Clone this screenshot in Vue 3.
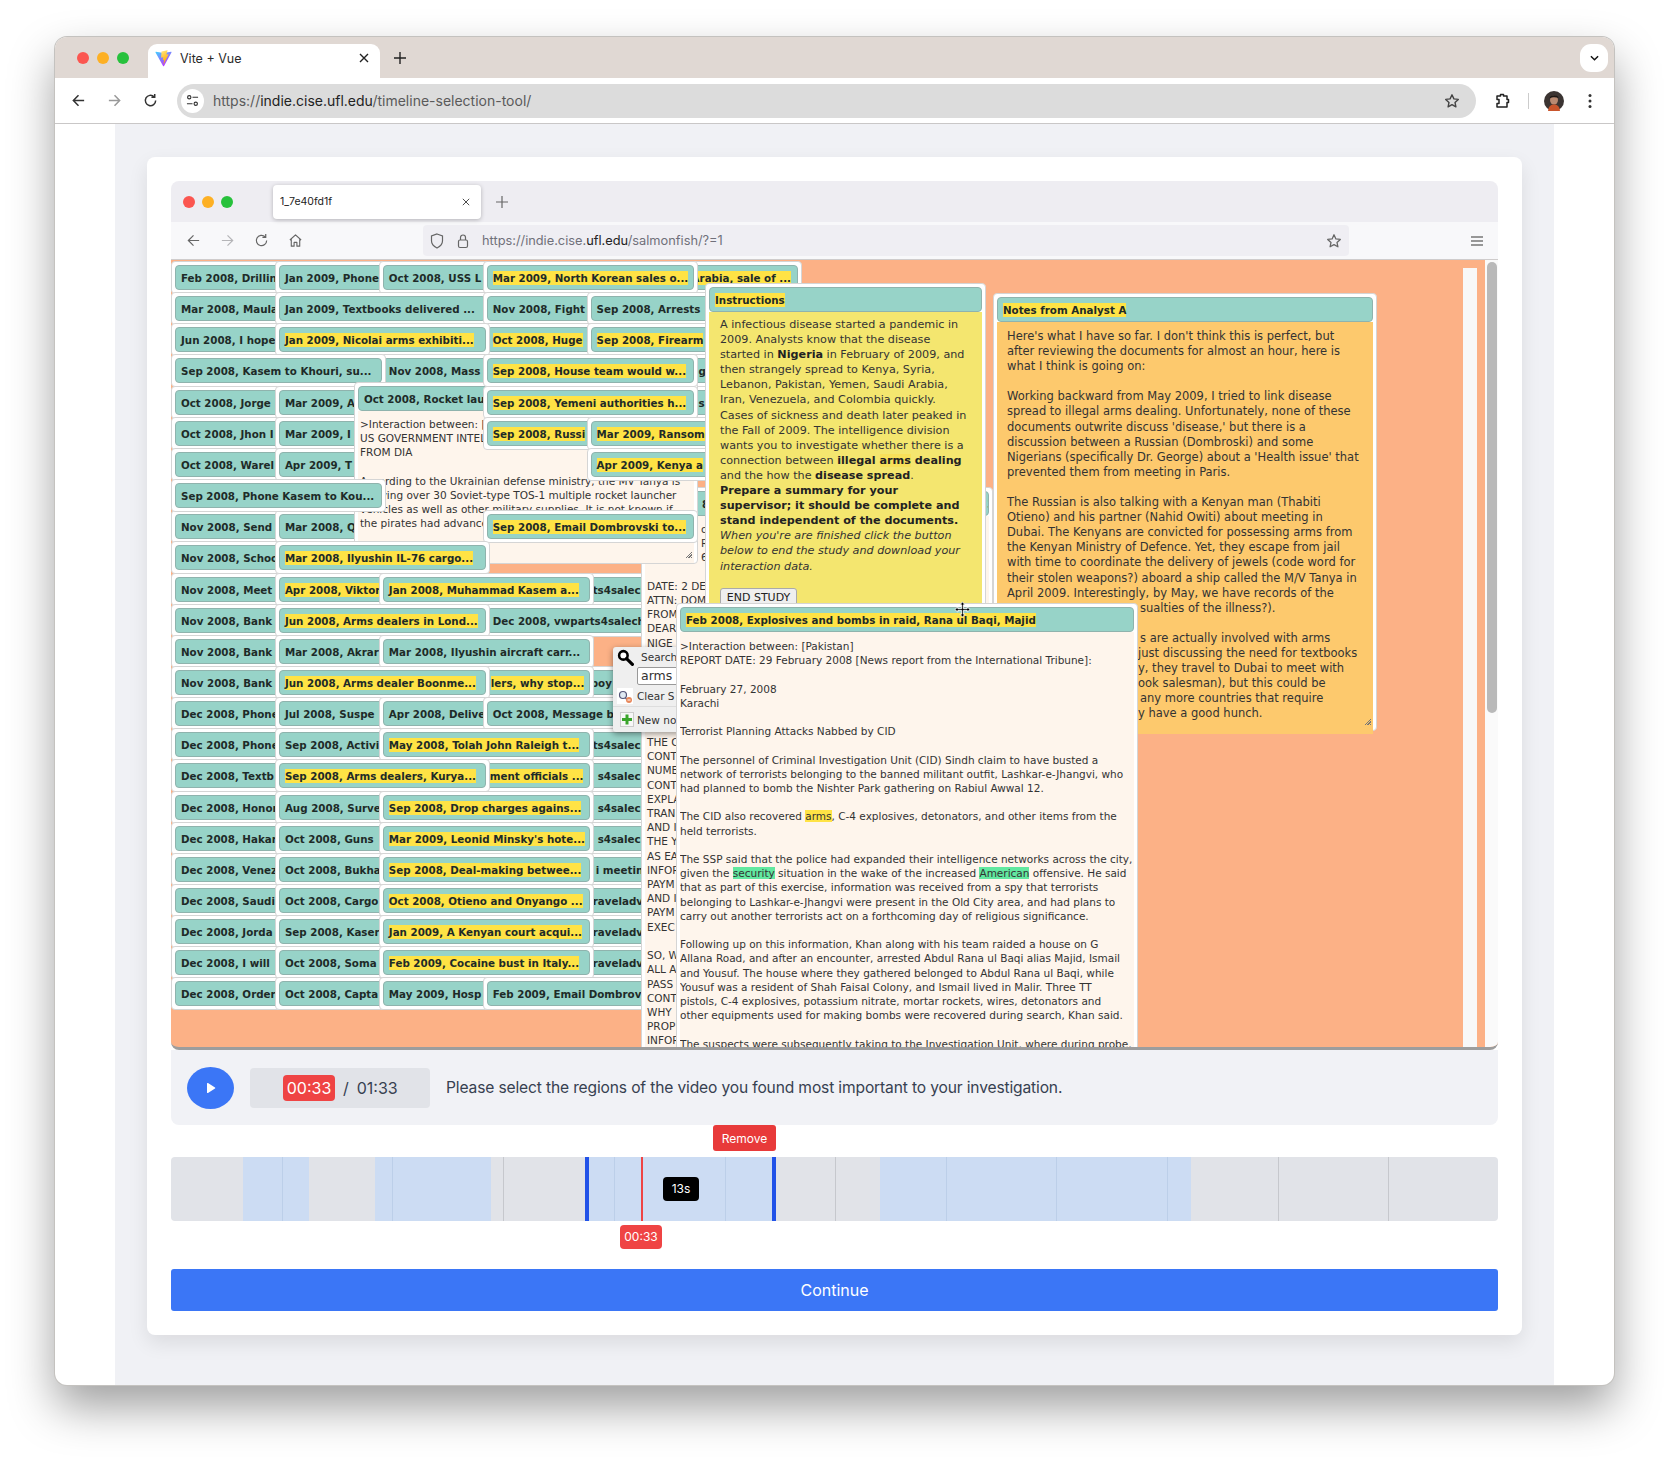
<template>
  <div class="stage">
    <div class="window">
      <div class="tabstrip">
        <div class="lights"><i class="red"></i><i class="amber"></i><i class="green"></i></div>
        <div class="tab">
          <svg class="vite" viewBox="0 0 32 32" width="17" height="17">
            <defs>
              <linearGradient id="vp" x1="0" y1="0" x2="0.6" y2="1"><stop offset="0" stop-color="#41d1ff" /><stop offset="1" stop-color="#bd34fe" /></linearGradient>
              <linearGradient id="vy" x1="0" y1="0" x2="0.3" y2="1"><stop offset="0" stop-color="#ffea83" /><stop offset="1" stop-color="#ffa800" /></linearGradient>
            </defs>
            <path d="M31 4.500 17 30c-.4.700-1.400.700-1.800 0L1 4.500c-.4-.7.200-1.600 1-1.400l14 2.500 14-2.500c.8-.2 1.400.700 1 1.400z" fill="url(#vp)" />
            <path d="M23 .5 12.500 2.600c-.2 0-.3.200-.3.400l-.7 11c0 .3.200.5.500.4l3-.7c.3 0 .5.200.5.500l-.9 4.300c0 .3.200.5.500.4l1.800-.6c.3 0 .5.200.5.500l-1.400 6.800c0 .4.500.6.700.3l.2-.3 8.600-17.200c.1-.3-.1-.6-.4-.5l-3 .6c-.3 0-.5-.2-.5-.5l2-7.100c0-.4-.2-.6-.6-.5z" fill="url(#vy)" />
          </svg>
          <span class="tab-title">Vite + Vue</span>
          <svg class="tab-x" viewBox="0 0 10 10" width="10" height="10"><path d="M1 1l8 8M9 1l-8 8" stroke="#222" stroke-width="1.400" /></svg>
        </div>
        <svg class="tab-plus" viewBox="0 0 12 12" width="12" height="12"><path d="M6 0v12M0 6h12" stroke="#222" stroke-width="1.400" /></svg>
        <div class="tab-menu">
          <svg viewBox="0 0 10 6" width="9" height="6"><path d="M1 1l4 4 4-4" fill="none" stroke="#111" stroke-width="1.600" /></svg>
        </div>
      </div>

      <div class="toolbar">
        <svg class="nav" viewBox="0 0 16 16" width="15" height="15"><path d="M14 8H3M8 2.500 2.500 8 8 13.500" fill="none" stroke="#333" stroke-width="1.600" /></svg>
        <svg class="nav" viewBox="0 0 16 16" width="15" height="15"><path d="M2 8h11M8 2.500 13.500 8 8 13.500" fill="none" stroke="#999" stroke-width="1.600" /></svg>
        <svg class="nav" viewBox="0 0 16 16" width="15" height="15"><path d="M13.500 8A5.500 5.500 0 1 1 11.800 4M12.500 1v3.600H9" fill="none" stroke="#333" stroke-width="1.600" /></svg>
        <div class="omnibox">
          <span class="site-btn">
            <svg viewBox="0 0 14 14" width="13" height="13"><g fill="none" stroke="#333" stroke-width="1.200"><circle cx="3.500" cy="3.500" r="1.800" /><circle cx="10.500" cy="10.500" r="1.800" /><path d="M7 3.500h6M1 10.500h6" /></g></svg>
          </span>
          <span class="url"><span class="dim">https://</span>indie.cise.ufl.edu<span class="dim">/timeline-selection-tool/</span></span>
          <svg class="omni-star" viewBox="0 0 16 16" width="16" height="16"><path d="M8 1.800l1.900 4.100 4.400.5-3.300 3 .9 4.400L8 11.600l-3.900 2.200.9-4.400-3.300-3 4.400-.5z" fill="none" stroke="#444" stroke-width="1.400" stroke-linejoin="round" /></svg>
        </div>
        <svg class="puzzle" viewBox="0 0 16 16" width="16" height="18"><path d="M3 3h3.500V1.500h3V3H13v3.500h1.500v3H13V14H3V10.500h2v-4H3z" fill="none" stroke="#222" stroke-width="1.500" stroke-linejoin="round" /></svg>
        <span class="tool-sep"></span>
        <svg class="avatar" viewBox="0 0 20 20" width="20" height="20">
          <circle cx="10" cy="10" r="10" fill="#3b3432" />
          <ellipse cx="10" cy="9" rx="4" ry="4.500" fill="#b98a72" />
          <path d="M4 20c.5-5 3-6.500 6-6.500s5.500 1.500 6 6.500z" fill="#c9552c" />
          <path d="M5.500 7.500C6 3.500 14 3 14.500 7 12 6 8 6 5.500 7.500z" fill="#1d1715" />
        </svg>
        <svg class="dots" viewBox="0 0 4 16" width="4" height="16"><circle cx="2" cy="2.500" r="1.500" fill="#333" /><circle cx="2" cy="8" r="1.500" fill="#333" /><circle cx="2" cy="13.500" r="1.500" fill="#333" /></svg>
      </div>

      <div class="page">
        <div class="card">
          <div class="inner-tabs">
            <div class="lights small"><i class="red"></i><i class="amber"></i><i class="green"></i></div>
            <div class="inner-tab">
              <span>1_7e40fd1f</span>
              <svg viewBox="0 0 10 10" width="8" height="8"><path d="M1 1l8 8M9 1l-8 8" stroke="#444" stroke-width="1.200" /></svg>
            </div>
            <svg class="inner-plus" viewBox="0 0 12 12" width="12" height="12"><path d="M6 0v12M0 6h12" stroke="#666" stroke-width="1.200" /></svg>
          </div>
          <div class="inner-toolbar">
            <svg class="inav" viewBox="0 0 16 16" width="15" height="15"><path d="M14 8H2.500M8 2.500 2.500 8 8 13.500" fill="none" stroke="#666" stroke-width="1.300" /></svg>
            <svg class="inav" viewBox="0 0 16 16" width="15" height="15"><path d="M2 8h11.500M8 2.500 13.500 8 8 13.500" fill="none" stroke="#b5b5b8" stroke-width="1.300" /></svg>
            <svg class="inav" viewBox="0 0 16 16" width="15" height="15"><path d="M13.500 8A5.500 5.500 0 1 1 11.800 4M12.500 1v3.600H9" fill="none" stroke="#666" stroke-width="1.300" /></svg>
            <svg class="inav" viewBox="0 0 16 16" width="15" height="15"><path d="M2 7.500 8 2l6 5.500M3.500 6.500V14h3v-4h3v4h3V6.500" fill="none" stroke="#666" stroke-width="1.200" stroke-linejoin="round" /></svg>
            <div class="inner-omnibox">
              <svg viewBox="0 0 14 16" width="14" height="16"><path d="M7 1l5.500 2v5c0 3.500-2.500 5.500-5.500 7-3-1.500-5.500-3.500-5.500-7V3z" fill="none" stroke="#666" stroke-width="1.200" /></svg>
              <svg viewBox="0 0 12 16" width="12" height="16"><rect x="1.500" y="7" width="9" height="7.500" rx="1.500" fill="none" stroke="#666" stroke-width="1.200" /><path d="M3.500 7V4.500a2.500 2.500 0 0 1 5 0V7" fill="none" stroke="#666" stroke-width="1.200" /></svg>
              <span class="inner-url">https://indie.cise.<b>ufl.edu</b>/salmonfish/?=1</span>
              <svg class="inner-star" viewBox="0 0 16 16" width="16" height="16"><path d="M8 1.800l1.900 4.100 4.400.5-3.300 3 .9 4.400L8 11.600l-3.900 2.200.9-4.400-3.300-3 4.400-.5z" fill="none" stroke="#666" stroke-width="1.300" stroke-linejoin="round" /></svg>
            </div>
            <svg class="inner-menu" viewBox="0 0 12 12" width="12" height="12"><path d="M0 2h12M0 6h12M0 10h12" stroke="#777" stroke-width="1.400" /></svg>
          </div>

          <div class="canvas">
            <div class="page-strip"></div>
            <div class="scroll-track"><div class="scroll-thumb"></div></div>

            <div v-for="(d, i) in baseDocs" :key="'b' + i" class="doc" :style="docPos(d)">
              <div class="doc-title" :style="{ paddingLeft: d.p + 'px' }"><span :class="{ hl: d.y }">{{ d.t }}</span></div>
            </div>

            <div class="win date-win">
              <div class="doc-title date-title"><span>8</span><span class="date-tail">3.</span></div>
              <div class="win-body date-body">
                <template v-for="(l, i) in dateLines" :key="i"><span :style="{ marginLeft: l.x + 'px' }">{{ l.t }}</span><br /></template>
              </div>
            </div>

            <div class="win rocket-win">
              <div class="doc-title">Oct 2008, Rocket lau</div>
              <div class="win-body">
                &gt;Interaction between: [<br />
                US GOVERNMENT INTEL<br />
                FROM DIA<br />
                <br />
                According to the Ukrainian defense ministry, the MV Tanya is<br />
                carrying over 30 Soviet-type TOS-1 multiple rocket launcher<br />
                vehicles as well as other military supplies. It is not known if<br />
                the pirates had advance
              </div>
              <span class="grip"></span>
            </div>

            <div v-for="(d, i) in topDocs" :key="'t' + i" class="doc" :style="docPos(d)">
              <div class="doc-title"><span :class="{ hl: d.y }">{{ d.t }}</span></div>
            </div>

            <div class="win instr-win">
              <div class="doc-title"><span class="hl">Instructions</span></div>
              <div class="win-body instr-body">
                A infectious disease started a pandemic in<br />
                2009. Analysts know that the disease<br />
                started in <b>Nigeria</b> in February of 2009, and<br />
                then strangely spread to Kenya, Syria,<br />
                Lebanon, Pakistan, Yemen, Saudi Arabia,<br />
                Iran, Venezuela, and Colombia quickly.<br />
                Cases of sickness and death later peaked in<br />
                the Fall of 2009. The intelligence division<br />
                wants you to investigate whether there is a<br />
                connection between <b>illegal <span class="soft">arms</span> dealing</b><br />
                and the how the <b>disease spread</b>.<br />
                <b>Prepare a summary for your<br />
                supervisor; it should be complete and<br />
                stand independent of the documents.</b><br />
                <i>When you're are finished click the button<br />
                below to end the study and download your<br />
                interaction data.</i>
                <button class="end-btn">END STUDY</button>
              </div>
            </div>

            <div class="win notes-win">
              <div class="doc-title"><span class="hl">Notes from Analyst A</span></div>
              <div class="win-body notes-body">
                <template v-for="(l, i) in noteLines" :key="i"><span :style="{ marginLeft: l.x + 'px' }">{{ l.t }}</span><br /></template>
              </div>
              <span class="grip"></span>
            </div>

            <div class="search-pop">
              <div class="pop-row pop-search">
                <svg viewBox="0 0 16 16" width="17" height="17"><circle cx="6" cy="6" r="4" fill="#fff" stroke="#000" stroke-width="2.400" /><path d="M9 9l5.500 5.500" stroke="#000" stroke-width="3" stroke-linecap="round" /></svg>
                <span>Search</span>
              </div>
              <div class="pop-input">arms</div>
              <div class="pop-row pop-clear">
                <svg viewBox="0 0 16 16" width="16" height="16"><rect width="16" height="16" fill="#fff" /><circle cx="6" cy="7" r="3.500" fill="#dfe9f2" stroke="#557" stroke-width="1.200" /><path d="M8.500 10l2 2" stroke="#557" stroke-width="1.400" /><circle cx="12" cy="12" r="3" fill="#e8875a" /><path d="M10.500 12h3" stroke="#fff" /></svg>
                <span>Clear S</span>
              </div>
              <div class="pop-row pop-new">
                <span class="plus-box"><svg viewBox="0 0 12 12" width="13" height="13"><path d="M6 1v10M1 6h10" stroke="#3aa52c" stroke-width="3" /></svg></span>
                <span>New no</span>
              </div>
            </div>

            <div class="win feb-win">
              <div class="doc-title"><span class="hl">Feb 2008, Explosives and bombs in raid, Rana ul Baqi, Majid</span></div>
              <div class="win-body feb-body">
                &gt;Interaction between: [Pakistan]<br />
                REPORT DATE: 29 February 2008 [News report from the International Tribune]:<br />
                <br />
                February 27, 2008<br />
                Karachi<br />
                <br />
                Terrorist Planning Attacks Nabbed by CID<br />
                <br />
                The personnel of Criminal Investigation Unit (CID) Sindh claim to have busted a<br />
                network of terrorists belonging to the banned militant outfit, Lashkar-e-Jhangvi, who<br />
                had planned to bomb the Nishter Park gathering on Rabiul Awwal 12.<br />
                <br />
                The CID also recovered <span class="mark-y">arms</span>, C-4 explosives, detonators, and other items from the<br />
                held terrorists.<br />
                <br />
                The SSP said that the police had expanded their intelligence networks across the city,<br />
                given the <span class="mark-g">security</span> situation in the wake of the increased <span class="mark-g">American</span> offensive. He said<br />
                that as part of this exercise, information was received from a spy that terrorists<br />
                belonging to Lashkar-e-Jhangvi were present in the Old City area, and had plans to<br />
                carry out another terrorists act on a forthcoming day of religious significance.<br />
                <br />
                Following up on this information, Khan along with his team raided a house on G<br />
                Allana Road, and after an encounter, arrested Abdul Rana ul Baqi alias Majid, Ismail<br />
                and Yousuf. The house where they gathered belonged to Abdul Rana ul Baqi, while<br />
                Yousuf was a resident of Shah Faisal Colony, and Ismail lived in Malir. Three TT<br />
                pistols, C-4 explosives, potassium nitrate, mortar rockets, wires, detonators and<br />
                other equipments used for making bombs were recovered during search, Khan said.<br />
                <br />
                The suspects were subsequently taking to the Investigation Unit, where during probe,
              </div>
            </div>

            <svg class="move-cursor" viewBox="0 0 20 20" width="17" height="17">
              <path d="M10 1l3 3.500h-2v4.500h4.500V7l3.500 3-3.500 3v-2H11v4.500h2L10 19l-3-3.500h2V11H4.500v2L1 10l3.500-3v2H9V4.500H7z" fill="#000" stroke="#fff" stroke-width="1" />
            </svg>
          </div>

          <div class="controls">
            <button class="play"><svg viewBox="0 0 10 12" width="10" height="12"><path d="M1 1.500v9c0 .5.500.8 1 .5l7-4.500c.4-.2.400-.8 0-1L2 1c-.5-.3-1 0-1 .5z" fill="#fff" /></svg></button>
            <div class="time-box">
              <span class="time-now">00:33</span>
              <span>/</span>
              <span>01:33</span>
            </div>
            <span class="hint">Please select the regions of the video you found most important to your investigation.</span>
          </div>

          <div class="timeline">
            <div class="track">
              <div v-for="(s, i) in segments" :key="'s' + i" class="segment" :style="{ left: s.x + 'px', width: s.w + 'px' }"></div>
              <div class="segment active"></div>
              <div v-for="x in grayTicks" :key="'g' + x" class="tick" :style="{ left: x + 'px' }"></div>
              <div v-for="x in blueTicks" :key="'k' + x" class="tick blue" :style="{ left: x + 'px' }"></div>
              <div class="playhead"></div>
              <div class="duration">13s</div>
            </div>
            <button class="remove">Remove</button>
            <div class="time-tag">00:33</div>
          </div>

          <button class="continue">Continue</button>
        </div>
      </div>
    </div>
  </div>
</template>

<script setup>
// r = row on the canvas, c = column, y = highlighted, p = left padding of the title
const doc = (r, c, t, y = false, p = 5) => ({ r, c, t, y, p })

const baseDocs = [
  doc(0, 4, 'Arabia, sale of ...', true, 100),
  doc(0, 0, 'Feb 2008, Drillin'), doc(0, 1, 'Jan 2009, Phone'), doc(0, 2, 'Oct 2008, USS L'),
  doc(0, 3, 'Mar 2009, North Korean sales o...', true),
  doc(1, 0, 'Mar 2008, Maula'), doc(1, 1, 'Jan 2009, Textbooks delivered ...'), doc(1, 3, 'Nov 2008, Fight'), doc(1, 4, 'Sep 2008, Arrests'),
  doc(2, 0, 'Jun 2008, I hope'), doc(2, 3, 'Oct 2008, Huge', true), doc(2, 4, 'Sep 2008, Firearm', true),
  doc(2, 1, 'Jan 2009, Nicolai arms exhibiti...', true),
  doc(3, 2, 'Nov 2008, Mass'), doc(3, 4, 'g', false, 107),
  doc(3, 0, 'Sep 2008, Kasem to Khouri, su...'),
  doc(4, 0, 'Oct 2008, Jorge'), doc(4, 1, 'Mar 2009, A'), doc(4, 4, 's', false, 107),
  doc(5, 0, 'Oct 2008, Jhon I'), doc(5, 1, 'Mar 2009, I'),
  doc(6, 0, 'Oct 2008, Warel'), doc(6, 1, 'Apr 2009, T'),
  doc(8, 0, 'Nov 2008, Send'), doc(8, 1, 'Mar 2008, Q'),
  doc(9, 0, 'Nov 2008, Schoo'),
  doc(10, 0, 'Nov 2008, Meet'), doc(10, 1, 'Apr 2008, Viktor', true), doc(10, 3, 'ts4salech', false, 105),
  doc(10, 2, 'Jan 2008, Muhammad Kasem a...', true),
  doc(11, 0, 'Nov 2008, Bank'), doc(11, 3, 'Dec 2008, vwparts4salech'),
  doc(11, 1, 'Jun 2008, Arms dealers in Lond...', true),
  doc(12, 0, 'Nov 2008, Bank'), doc(12, 1, 'Mar 2008, Akrar'), doc(12, 2, 'Mar 2008, Ilyushin aircraft carr...'),
  doc(13, 0, 'Nov 2008, Bank'), doc(13, 3, 'boy', false, 103),
  doc(13, 2, 'lers, why stop...', true, 107),
  doc(13, 1, 'Jun 2008, Arms dealer Boonme...', true),
  doc(14, 0, 'Dec 2008, Phone'), doc(14, 1, 'Jul 2008, Suspe'), doc(14, 2, 'Apr 2008, Delive'), doc(14, 3, 'Oct 2008, Message b'),
  doc(15, 0, 'Dec 2008, Phone'), doc(15, 1, 'Sep 2008, Activi'), doc(15, 3, 'ts4salech', false, 105),
  doc(15, 2, 'May 2008, Tolah John Raleigh t...', true),
  doc(16, 0, 'Dec 2008, Textb'), doc(16, 3, 's4salech', false, 110),
  doc(16, 2, 'ment officials ...', true, 106),
  doc(16, 1, 'Sep 2008, Arms dealers, Kurya...', true),
  doc(17, 0, 'Dec 2008, Honor'), doc(17, 1, 'Aug 2008, Surve'), doc(17, 3, 's4salech', false, 110),
  doc(17, 2, 'Sep 2008, Drop charges agains...', true),
  doc(18, 0, 'Dec 2008, Hakar'), doc(18, 1, 'Oct 2008, Guns'), doc(18, 3, 's4salech', false, 110),
  doc(18, 2, 'Mar 2009, Leonid Minsky\'s hote...', true),
  doc(19, 0, 'Dec 2008, Venez'), doc(19, 1, 'Oct 2008, Bukha'), doc(19, 3, 'i meetin', false, 108),
  doc(19, 2, 'Sep 2008, Deal-making betwee...', true),
  doc(20, 0, 'Dec 2008, Saudi'), doc(20, 1, 'Oct 2008, Cargo'), doc(20, 3, 'raveladv', false, 105),
  doc(20, 2, 'Oct 2008, Otieno and Onyango ...', true),
  doc(21, 0, 'Dec 2008, Jorda'), doc(21, 1, 'Sep 2008, Kaser'), doc(21, 3, 'raveladv', false, 105),
  doc(21, 2, 'Jan 2009, A Kenyan court acqui...', true),
  doc(22, 0, 'Dec 2008, I will'), doc(22, 1, 'Oct 2008, Soma'), doc(22, 3, 'raveladv', false, 105),
  doc(22, 2, 'Feb 2009, Cocaine bust in Italy...', true),
  doc(23, 0, 'Dec 2008, Order'), doc(23, 1, 'Oct 2008, Capta'), doc(23, 2, 'May 2009, Hosp'), doc(23, 3, 'Feb 2009, Email Dombrov')
]

const topDocs = [
  doc(3, 3, 'Sep 2008, House team would w...', true),
  doc(4, 3, 'Sep 2008, Yemeni authorities h...', true),
  doc(5, 3, 'Sep 2008, Russi', true),
  doc(5, 4, 'Mar 2009, Ransom', true),
  doc(6, 4, 'Apr 2009, Kenya a', true),
  doc(7, 0, 'Sep 2008, Phone Kasem to Kou...'),
  doc(8, 3, 'Sep 2008, Email Dombrovski to...', true),
  doc(9, 1, 'Mar 2008, Ilyushin IL-76 cargo...', true)
]

const docPos = (d) => ({
  left: d.c * 103.9 + 'px',
  top: 1 + d.r * 31.15 + 'px'
})

// strings are plain lines, [x, text] lines show only what sticks out from under another window
const toLines = (list) => list.map((l) => (Array.isArray(l) ? { x: l[0], t: l[1] } : { x: 0, t: l }))

const dateLines = toLines([
  [54, 'o'],
  [54, 'RI'],
  [54, '6'],
  '',
  'DATE: 2 DE',
  'ATTN: DOM',
  'FROM',
  'DEAR',
  'NIGE',
  '', '', '', '', '', '',
  'THE C',
  'CONT',
  'NUME',
  'CONT',
  'EXPLA',
  'TRAN',
  'AND I',
  'THE Y',
  'AS EA',
  'INFOR',
  'PAYM',
  'AND I',
  'PAYM',
  'EXEC',
  '',
  'SO, W',
  'ALL A',
  'PASS',
  'CONT',
  'WHY',
  'PROP',
  'INFOR'
])

const noteLines = toLines([
  'Here\'s what I have so far. I don\'t think this is perfect, but',
  'after reviewing the documents for almost an hour, here is',
  'what I think is going on:',
  '',
  'Working backward from May 2009, I tried to link disease',
  'spread to illegal arms dealing. Unfortunately, none of these',
  'documents outwrite discuss \'disease,\' but there is a',
  'discussion between a Russian (Dombroski) and some',
  'Nigerians (specifically Dr. George) about a \'Health issue\' that',
  'prevented them from meeting in Paris.',
  '',
  'The Russian is also talking with a Kenyan man (Thabiti',
  'Otieno) and his partner (Nahid Owiti) about meeting in',
  'Dubai. The Kenyans are convicted for possessing arms from',
  'the Kenyan Ministry of Defence. Yet, they escape from jail',
  'with time to coordinate the delivery of jewels (code word for',
  'their stolen weapons?) aboard a ship called the M/V Tanya in',
  'April 2009. Interestingly, by May, we have records of the',
  [133, 'sualties of the illness?).'],
  '',
  [133, 's are actually involved with arms'],
  [131, 'just discussing the need for textbooks'],
  [131, 'y, they travel to Dubai to meet with'],
  [131, 'ook salesman), but this could be'],
  [133, 'any more countries that require'],
  [131, 'y have a good hunch.']
])

const segments = [
  { x: 72, w: 66 },
  { x: 204, w: 116 },
  { x: 709, w: 311 }
]
const grayTicks = [332, 664, 1107, 1217]
const blueTicks = [111, 221, 443, 554, 775, 885, 996]
</script>

<style>
html,
body {
  background: #fff;
}
</style>

<style scoped>
.stage {
  height: 1459px;
  box-sizing: border-box;
  padding: 37px 56px 0 55px;
  overflow: hidden;
}
.window {
  height: 1348px;
  display: flex;
  flex-direction: column;
  border-radius: 12px;
  background: #fff;
  overflow: hidden;
  box-shadow: 0 0 0 1px #c4c2bf, 0 22px 46px rgba(0, 0, 0, 0.38);
  font-family: Inter, "Liberation Sans", sans-serif;
}

/* chrome */
.tabstrip {
  height: 41px;
  flex: none;
  background: #e0d8d3;
  display: flex;
  align-items: flex-end;
  padding-left: 22px;
}
.lights {
  display: flex;
  gap: 8px;
  align-self: center;
  margin-right: 19px;
}
.lights i {
  width: 12px;
  height: 12px;
  border-radius: 50%;
  display: block;
}
.lights .red { background: #fb5650; }
.lights .amber { background: #fdb024; }
.lights .green { background: #27c13c; }
.tab {
  width: 232px;
  height: 34px;
  background: #fff;
  border-radius: 9px 9px 0 0;
  display: flex;
  align-items: center;
  padding: 0 11px 6px 7px;
  box-sizing: border-box;
}
.tab-title {
  font-size: 12.500px;
  color: #2b2b2b;
  margin-left: 8px;
  flex: 1;
}
.tab-plus {
  margin: 0 0 14px 14px;
}
.tab-menu {
  margin-left: auto;
  margin-right: 6px;
  margin-bottom: 6px;
  width: 28px;
  height: 28px;
  background: #fff;
  border-radius: 11px;
  display: flex;
  align-items: center;
  justify-content: center;
}
.toolbar {
  height: 46px;
  flex: none;
  box-sizing: border-box;
  border-bottom: 1px solid #c9c7c7;
  background: #fff;
  display: flex;
  align-items: center;
  padding-left: 16px;
}
.nav {
  margin-right: 21px;
}
.nav:nth-child(3) {
  margin-right: 19px;
}
.omnibox {
  width: 1299px;
  height: 34px;
  border-radius: 17px;
  background: #dcdcdc;
  display: flex;
  align-items: center;
  padding-left: 4px;
  box-sizing: border-box;
  flex: none;
}
.site-btn {
  width: 23px;
  height: 24px;
  border-radius: 50%;
  background: #fff;
  display: flex;
  align-items: center;
  justify-content: center;
  margin-right: 9px;
}
.url {
  font-size: 14px;
  color: #222;
}
.url .dim {
  color: #5a5a5a;
}
.omni-star {
  margin-left: auto;
  margin-right: 16px;
}
.puzzle {
  margin-left: 18px;
}
.tool-sep {
  width: 1px;
  height: 16px;
  background: #ccc;
  margin: 0 15px 0 18px;
}
.avatar {
  margin-right: 24px;
}

.page {
  flex: 1;
  margin: 0 60px;
  background: #f0f1f5;
  padding: 33px 32px 0;
}
.card {
  background: #fff;
  border-radius: 8px;
  padding: 24px;
  box-shadow: 0 8px 20px rgba(0, 0, 0, 0.09);
}

/* nested browser */
.inner-tabs {
  height: 41px;
  background: #eeedf2;
  border-radius: 8px 8px 0 0;
  display: flex;
  align-items: center;
  padding-left: 12px;
}
.lights.small {
  gap: 7px;
  margin-right: 40px;
}
.inner-tab {
  width: 208px;
  height: 34px;
  background: #fff;
  border-radius: 4px;
  box-shadow: 0 1px 4px rgba(0, 0, 0, 0.25);
  display: flex;
  align-items: center;
  justify-content: space-between;
  padding: 0 11px 0 7px;
  box-sizing: border-box;
  font-size: 10.500px;
  color: #222;
}
.inner-plus {
  margin-left: 15px;
}
.inner-toolbar {
  height: 37px;
  background: #f8f8fa;
  display: flex;
  align-items: center;
  padding: 0 15px;
}
.inav {
  margin-right: 19px;
}
.inner-omnibox {
  margin-left: 101px;
  width: 926px;
  height: 31px;
  background: #efeef3;
  border-radius: 4px;
  display: flex;
  align-items: center;
  gap: 13px;
  padding-left: 7px;
  box-sizing: border-box;
}
.inner-url {
  font-size: 12.800px;
  color: #70707a;
}
.inner-url b {
  font-weight: 400;
  color: #222;
}
.inner-star {
  margin-left: auto;
  margin-right: 7px;
}
.inner-menu {
  margin-left: auto;
}

/* the desktop of the recorded tool */
.canvas {
  position: relative;
  height: 791px;
  box-sizing: border-box;
  overflow: hidden;
  background: #fcb186;
  border-top: 1px solid #cfcccc;
  border-bottom: 3px solid #9d9d9d;
  border-radius: 0 0 8px 8px;
  font-family: "DejaVu Sans", Verdana, sans-serif;
  color: #2a2a2a;
}
.page-strip {
  position: absolute;
  left: 1292px;
  top: 8px;
  bottom: 0;
  width: 14px;
  background: #f8f8f8;
}
.scroll-track {
  position: absolute;
  right: 0;
  top: 0;
  bottom: 0;
  width: 13px;
  background: #fafafa;
}
.scroll-thumb {
  margin: 2px 1px 0 2px;
  height: 451px;
  border-radius: 5px;
  background: #b9b9b9;
}
.doc {
  position: absolute;
  width: 215px;
  height: 33px;
  box-sizing: border-box;
  padding: 3px;
  background: #fff;
  border: 1px solid #d5d5d5;
  border-radius: 4px;
}
.doc-title {
  height: 25px;
  line-height: 24px;
  box-sizing: border-box;
  background: #97d3c8;
  border: 1px solid #8fb3ad;
  border-radius: 4px;
  padding-left: 5px;
  font-size: 10.300px;
  font-weight: 700;
  color: #1e2b28;
  white-space: nowrap;
  overflow: hidden;
}
.hl {
  background: #ffe345;
  padding: 1px 0;
}
.win {
  position: absolute;
  box-sizing: border-box;
  padding: 3px;
  background: #fff;
  border: 1px solid #d5d5d5;
  border-radius: 4px;
}
.win-body {
  background: #fef5ec;
  font-size: 10.500px;
  line-height: 14.200px;
  white-space: nowrap;
  overflow: hidden;
  color: #333;
}
.grip {
  position: absolute;
  right: 5px;
  bottom: 5px;
  width: 7px;
  height: 7px;
  background: repeating-linear-gradient(135deg, transparent 0 1px, #777 1px 2px);
  clip-path: polygon(100% 0, 100% 100%, 0 100%);
}
.date-win {
  left: 470px;
  top: 227px;
  width: 352px;
  height: 600px;
}
.date-title {
  padding-left: 56px;
}
.date-tail {
  margin-left: 278px;
}
.date-body {
  height: 560px;
  padding: 6px 0 0 2px;
}
.rocket-win {
  left: 183px;
  top: 122px;
  width: 344px;
  height: 182px;
}
.rocket-win .win-body {
  height: 146px;
  padding: 6px 0 0 2px;
}
.instr-win {
  left: 534px;
  top: 23px;
  width: 281px;
  height: 340px;
}
.instr-body {
  background: #f4e66f;
  height: 309px;
  padding: 5px 0 0 11px;
  font-size: 11.200px;
  line-height: 15.100px;
  color: #333;
}
.instr-body b {
  color: #222;
}
.soft {
  background: #f8e05a;
}
.end-btn {
  display: block;
  margin-top: 14px;
  width: 77px;
  height: 30px;
  padding: 0 0 10px;
  background: #efefef;
  border: 1px solid #aaa;
  border-radius: 3px;
  font-family: "DejaVu Sans", sans-serif;
  font-size: 11px;
  color: #222;
}
.notes-win {
  left: 822px;
  top: 33px;
  width: 384px;
  height: 438px;
}
.notes-body {
  background: #fdc96d;
  height: 405px;
  padding: 7px 0 0 10px;
  font-size: 11.500px;
  line-height: 15.100px;
  color: #333;
}
.search-pop {
  position: absolute;
  left: 442px;
  top: 387px;
  width: 100px;
  height: 85px;
  background: #efefef;
  border-radius: 3px;
  box-shadow: 0 2px 6px rgba(0, 0, 0, 0.4);
  font-size: 10.500px;
  color: #333;
}
.pop-row {
  display: flex;
  align-items: center;
  gap: 7px;
  padding-left: 4px;
}
.pop-search {
  height: 20px;
}
.pop-input {
  margin-left: 24px;
  height: 16px;
  line-height: 16px;
  background: #fff;
  border: 1px solid #999;
  border-radius: 2px;
  padding-left: 3px;
  font-size: 12.500px;
}
.pop-clear {
  height: 20px;
  margin-top: 1px;
  gap: 4px;
}
.pop-new {
  height: 25px;
  padding-left: 7px;
  gap: 3px;
  border-top: 1px solid #ddd;
}
.plus-box {
  width: 14px;
  height: 15px;
  display: flex;
  align-items: center;
  justify-content: center;
  background: #f7f7f7;
  border: 1px solid #ccc;
  box-sizing: border-box;
}
.feb-win {
  left: 505px;
  top: 343px;
  width: 462px;
  height: 460px;
}
.feb-body {
  height: 420px;
  padding-top: 7px;
}
.mark-y {
  background: #ffe345;
}
.mark-g {
  background: #62e8a0;
}
.move-cursor {
  position: absolute;
  left: 783px;
  top: 341px;
}

/* player */
.controls {
  height: 75px;
  background: #f1f2f6;
  border-radius: 0 0 8px 8px;
  display: flex;
  align-items: center;
  padding: 0 16px;
  gap: 16px;
}
.play {
  width: 47px;
  height: 42px;
  border: none;
  border-radius: 50%;
  background: #3b76f6;
  display: flex;
  align-items: center;
  justify-content: center;
  padding: 0;
}
.time-box {
  width: 180px;
  height: 40px;
  background: #e1e3e8;
  border-radius: 4px;
  display: flex;
  align-items: center;
  gap: 8px;
  padding-left: 33px;
  box-sizing: border-box;
  font-size: 16px;
  color: #374151;
}
.time-now {
  width: 52px;
  height: 26px;
  line-height: 26px;
  text-align: center;
  background: #ef4444;
  color: #fff;
  border-radius: 4px;
}
.hint {
  font-size: 15.600px;
  letter-spacing: -0.150px;
  color: #374151;
}
.timeline {
  position: relative;
  margin-top: 32px;
}
.track {
  position: relative;
  height: 64px;
  background: #e1e3e8;
  border-radius: 4px;
  overflow: hidden;
}
.segment {
  position: absolute;
  top: 0;
  bottom: 0;
  background: #ccdcf3;
}
.segment.active {
  left: 414px;
  width: 191px;
  border-left: 4px solid #2152e8;
  border-right: 4px solid #2152e8;
  box-sizing: border-box;
}
.tick {
  position: absolute;
  top: 0;
  bottom: 0;
  width: 1px;
  background: #c6c8cd;
}
.tick.blue {
  background: #bccfe9;
}
.playhead {
  position: absolute;
  left: 470px;
  top: 0;
  bottom: 0;
  width: 2px;
  background: #ef4444;
}
.duration {
  position: absolute;
  left: 492px;
  top: 20px;
  width: 36px;
  height: 24px;
  line-height: 24px;
  text-align: center;
  border-radius: 4px;
  background: #000;
  color: #fff;
  font-size: 12px;
}
.remove {
  position: absolute;
  left: 542px;
  top: -32px;
  width: 63px;
  height: 26px;
  padding: 0;
  border: none;
  border-radius: 3px;
  background: #e83a3a;
  color: #fff;
  font-family: inherit;
  font-size: 12px;
}
.time-tag {
  position: absolute;
  left: 449px;
  top: 68px;
  width: 42px;
  height: 24px;
  line-height: 24px;
  text-align: center;
  background: #ef4444;
  border-radius: 4px;
  color: #fff;
  font-size: 12px;
}
.continue {
  display: block;
  width: 100%;
  height: 42px;
  margin-top: 48px;
  border: none;
  border-radius: 3px;
  background: #3b76f6;
  color: #fff;
  font-family: inherit;
  font-size: 16px;
}
</style>
